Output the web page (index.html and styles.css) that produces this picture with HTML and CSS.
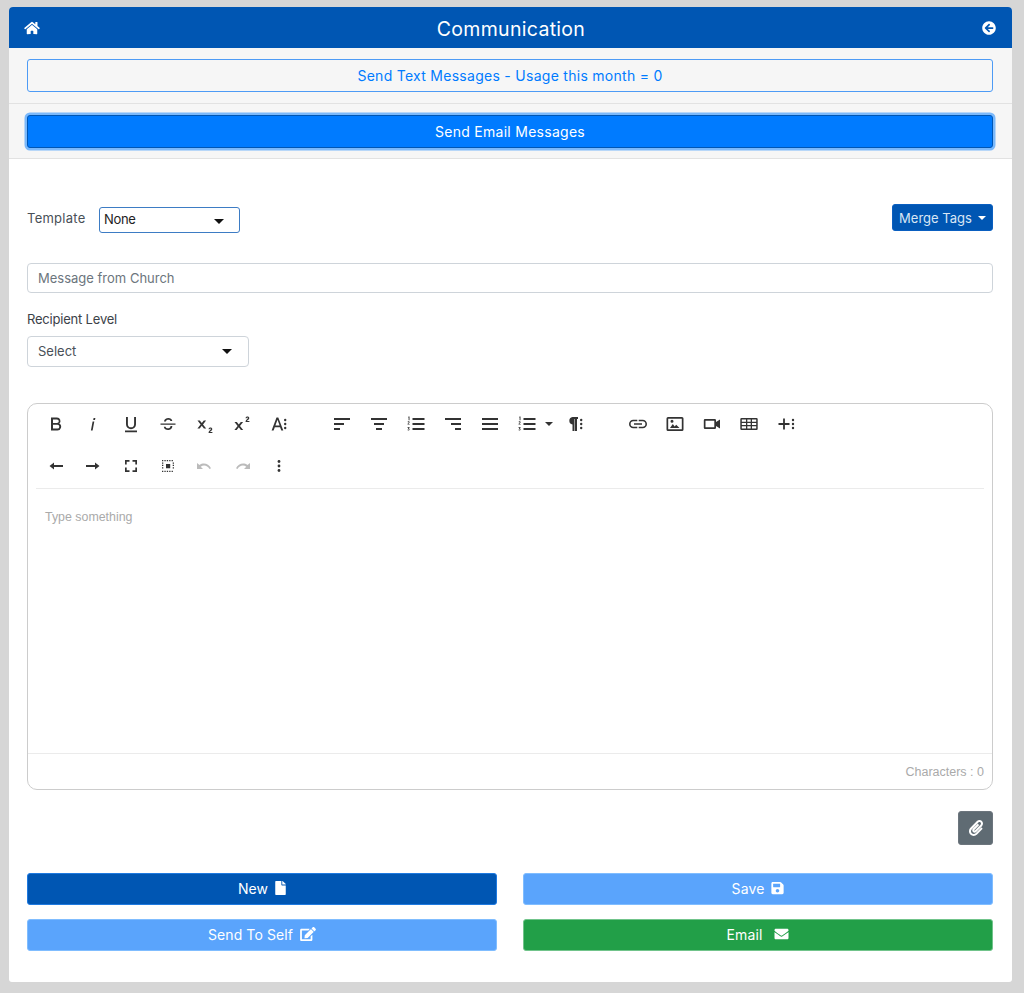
FILE: index.html
```html
<!DOCTYPE html>
<html lang="en">
<head>
<meta charset="utf-8">
<title>Communication</title>
<link rel="stylesheet" href="styles.css">
</head>
<body>
<main class="card">
  <header class="topbar">
    <svg class="top-icon home" viewBox="0 0 576 512"><path d="M280.37 148.26L96 300.11V464a16 16 0 0 0 16 16l112.06-.29a16 16 0 0 0 15.92-16V368a16 16 0 0 1 16-16h64a16 16 0 0 1 16 16v95.64a16 16 0 0 0 16 16.05L464 480a16 16 0 0 0 16-16V300L295.67 148.26a12.19 12.19 0 0 0-15.3 0zM571.6 251.47L488 182.56V44.05a12 12 0 0 0-12-12h-56a12 12 0 0 0-12 12v72.61L318.47 43a48 48 0 0 0-61 0L4.34 251.47a12 12 0 0 0-1.6 16.9l25.5 31A12 12 0 0 0 45.15 301l235.22-193.74a12.19 12.19 0 0 1 15.3 0L530.9 301a12 12 0 0 0 16.9-1.6l25.5-31a12 12 0 0 0-1.7-16.93z"/></svg>
    <h1 class="title">Communication</h1>
    <svg class="top-icon back" viewBox="0 0 512 512"><path d="M256 504C119 504 8 393 8 256S119 8 256 8s248 111 248 248-111 248-248 248zm28.9-143.6L209.4 288H392c13.3 0 24-10.7 24-24v-16c0-13.3-10.7-24-24-24H209.4l75.5-72.4c9.7-9.3 9.9-24.8.4-34.3l-11-10.9c-9.4-9.4-24.6-9.4-33.9 0L107.7 239c-9.4 9.4-9.4 24.6 0 33.9l132.7 132.7c9.4 9.4 24.6 9.4 33.9 0l11-10.9c9.5-9.5 9.3-25-.4-34.3z"/></svg>
  </header>

  <section class="band">
    <button class="band-btn outline">Send Text Messages - Usage this month = 0</button>
  </section>
  <section class="band">
    <button class="band-btn solid">Send Email Messages</button>
  </section>

  <div class="content">
    <div class="template-row">
      <label class="tpl-label">Template</label>
      <div class="tpl-select"><span>None</span><i class="caret dark"></i></div>
      <button class="merge">Merge Tags<i class="caret light"></i></button>
    </div>

    <div class="subject">Message from Church</div>

    <div class="recipient-label">Recipient Level</div>
    <div class="recipient"><span>Select</span><i class="caret dark"></i></div>

    <div class="editor">
      <div class="toolbar">
        <div class="tb-row">
          <div class="tb-group">
            <span class="tb"><svg viewBox="0 0 24 24"><path fill-rule="evenodd" d="M7 5.500h6a3.500 3.500 0 0 1 2.300 6.100A3.700 3.700 0 0 1 13.500 18.500H7zM9 7.400v3.600h4a1.800 1.800 0 0 0 0-3.600zM9 12.800v3.800h4.400a1.900 1.900 0 0 0 0-3.800z"/></svg></span>
            <span class="tb"><svg viewBox="0 0 24 24"><path d="M11.600 9.600h1.700l-1.700 9h-1.700zM12.600 6h1.800l-.4 1.900h-1.800z"/></svg></span>
            <span class="tb"><svg viewBox="0 0 24 24"><path d="M7 5h1.900v7.200a3.100 3.100 0 0 0 6.200 0V5H17v7.200a5 5 0 0 1-10 0zM6 18.600h12v1.700H6z"/></svg></span>
            <span class="tb"><svg viewBox="0 0 24 24"><path d="M4.500 11.400h15v1.400h-15zM8 9.600c0-4.600 8-5 8.300-.6h-1.800c-.4-2-4.600-1.800-4.600.6zM16.300 14c.3 5-8 5.400-8.500.8h1.800c.4 2.300 5 2.100 4.900-.8z"/></svg></span>
            <span class="tb"><svg viewBox="0 0 24 24"><path d="M4.500 8.500h2.300l2 2.600 2-2.600h2.300l-3.100 3.900 3.200 4.100h-2.300l-2.100-2.800-2.100 2.800H4.400l3.200-4.100zM15.500 17.200c.2-2.300 3.800-2.200 3.800-.1 0 1.500-1.700 2-2.300 3h2.400V21h-3.900c0-2.300 2.300-2.600 2.400-3.900 0-.8-1.200-.8-1.300.1z"/></svg></span>
            <span class="tb"><svg viewBox="0 0 24 24"><path d="M4.500 10h2.300l2 2.600 2-2.600h2.300l-3.100 3.900 3.200 4.100h-2.300l-2.100-2.800-2.100 2.800H4.400l3.200-4.100zM15.500 6.200c.2-2.300 3.800-2.200 3.800-.1 0 1.500-1.700 2-2.300 3h2.400V10h-3.900c0-2.300 2.300-2.600 2.400-3.900 0-.8-1.200-.8-1.300.1z"/></svg></span>
            <span class="tb"><svg viewBox="0 0 24 24"><path fill-rule="evenodd" d="M9.500 5.500h1.800l5 13h-2l-1.200-3.300H7.800l-1.200 3.300h-2zM8.400 13.500h4.200l-2.100-5.800z"/><circle cx="18.200" cy="8" r="1.200"/><circle cx="18.200" cy="12" r="1.200"/><circle cx="18.200" cy="16" r="1.200"/></svg></span>
          </div>
          <div class="tb-group">
            <span class="tb"><svg viewBox="0 0 24 24"><path d="M4 6h16v2H4zM4 11h10v2H4zM4 16h6v2H4z"/></svg></span>
            <span class="tb"><svg viewBox="0 0 24 24"><path d="M4 6h16v2H4zM7 11h10v2H7zM9 16h6v2H9z"/></svg></span>
            <span class="tb"><svg viewBox="0 0 24 24"><path d="M8.500 6h12v2h-12zM8.500 11h12v2h-12zM8.500 16h12v2h-12zM4.500 4.500h1v3.800h-.9V5.400h-.5zM3.500 10c.2-1 2.100-1 2.100.2 0 .8-1 1-1.200 1.700h1.300v.6h-2.200c0-1.200 1.200-1.400 1.200-2.200 0-.4-.5-.4-.6 0zM3.500 15h2.100v.5l-.8.800c1.200.2 1 2.200-.4 2.200-.5 0-.8-.2-1-.5l.4-.4c.3.400 1 .300 1-.2 0-.4-.4-.5-.8-.4v-.5l.7-.8H3.500z"/></svg></span>
            <span class="tb"><svg viewBox="0 0 24 24"><path d="M4 6h16v2H4zM10 11h10v2H10zM14 16h6v2h-6z"/></svg></span>
            <span class="tb"><svg viewBox="0 0 24 24"><path d="M4 6h16v2H4zM4 11h16v2H4zM4 16h16v2H4z"/></svg></span>
            <span class="tb tb-drop"><svg viewBox="0 0 24 24"><path d="M8.500 6h12v2h-12zM8.500 11h12v2h-12zM8.500 16h12v2h-12zM4.500 4.500h1v3.800h-.9V5.400h-.5zM3.500 10c.2-1 2.100-1 2.100.2 0 .8-1 1-1.200 1.700h1.300v.6h-2.200c0-1.200 1.200-1.400 1.200-2.200 0-.4-.5-.4-.6 0zM3.500 15h2.100v.5l-.8.800c1.200.2 1 2.200-.4 2.200-.5 0-.8-.2-1-.5l.4-.4c.3.400 1 .300 1-.2 0-.4-.4-.5-.8-.4v-.5l.7-.8H3.500z"/></svg><i class="caret tb-caret"></i></span>
            <span class="tb"><svg viewBox="0 0 24 24"><path d="M9.500 5H15v2h-1v12h-2V7h-.5v12h-2v-6.500a3.800 3.800 0 0 1 0-7.500z"/><circle cx="18.200" cy="8" r="1.200"/><circle cx="18.200" cy="12" r="1.200"/><circle cx="18.200" cy="16" r="1.200"/></svg></span>
          </div>
          <div class="tb-group">
            <span class="tb"><svg viewBox="0 0 24 24"><path d="M3 12a4.300 4.300 0 0 1 4.300-4.300h4v1.600h-4a2.700 2.700 0 0 0 0 5.400h4v1.600h-4A4.300 4.300 0 0 1 3 12zM8 11.200h8v1.600H8zM12.700 7.700h4a4.300 4.300 0 0 1 0 8.600h-4v-1.600h4a2.700 2.700 0 0 0 0-5.400h-4z"/></svg></span>
            <span class="tb"><svg viewBox="0 0 24 24"><path fill-rule="evenodd" d="M5 5h14a1.500 1.500 0 0 1 1.500 1.500v11A1.500 1.500 0 0 1 19 19H5a1.500 1.500 0 0 1-1.500-1.500v-11A1.500 1.500 0 0 1 5 5zM5.200 6.700v10.600h13.600V6.700zM7 16l2.800-4 1.900 2.600 1.500-1.800 3.300 3.200zM9 10.800a1.500 1.500 0 1 0 0-3 1.500 1.500 0 0 0 0 3z"/></svg></span>
            <span class="tb"><svg viewBox="0 0 24 24"><path fill-rule="evenodd" d="M5 7h9.800a1.200 1.200 0 0 1 1.200 1.200v1.800L20 7.500v9L16 14v1.800a1.200 1.200 0 0 1-1.200 1.200H5a1.200 1.200 0 0 1-1.200-1.200V8.200A1.200 1.200 0 0 1 5 7zM5.500 8.700v6.600h8.800V8.700z"/></svg></span>
            <span class="tb"><svg viewBox="0 0 24 24"><path fill-rule="evenodd" d="M4.500 6h15A1.200 1.200 0 0 1 20.700 7.200v9.600a1.200 1.200 0 0 1-1.200 1.200h-15a1.200 1.200 0 0 1-1.200-1.200V7.200A1.200 1.200 0 0 1 4.500 6zM4.800 7.400v2.300h4.200V7.400zM10.300 7.400v2.300h3.400V7.400zM15 7.400v2.300h4.200V7.400zM4.800 10.900v2.200h4.200v-2.200zM10.300 10.900v2.200h3.400v-2.200zM15 10.900v2.200h4.200v-2.200zM4.800 14.300v2.300h4.200v-2.300zM10.300 14.300v2.300h3.400v-2.300zM15 14.300v2.300h4.200v-2.300z"/></svg></span>
            <span class="tb"><svg viewBox="0 0 24 24"><path d="M9.100 6.500h1.800v4.600h4.600v1.800h-4.600v4.600H9.100v-4.600H4.500v-1.800h4.600z"/><circle cx="19" cy="8" r="1.200"/><circle cx="19" cy="12" r="1.200"/><circle cx="19" cy="16" r="1.200"/></svg></span>
          </div>
        </div>
        <div class="tb-row">
          <div class="tb-group">
            <span class="tb"><svg viewBox="0 0 24 24"><path d="M10 8.500v2.500h9v2h-9v2.500L5.500 12z"/></svg></span>
            <span class="tb"><svg viewBox="0 0 24 24"><path d="M14 8.500v2.500H5v2h9v2.500l4.500-3.500z"/></svg></span>
            <span class="tb"><svg viewBox="0 0 24 24"><path d="M6 6h4.500v1.700H7.700v2.800H6zM13.500 6H18v4.500h-1.700V7.700h-2.800zM6 13.500h1.700v2.800h2.800V18H6zM16.300 13.500H18V18h-4.500v-1.700h2.800z"/></svg></span>
            <span class="tb"><svg viewBox="0 0 24 24"><path d="M10 10h4.200v4.200H10zM6 6h1.300v1.300H6zM8.400 6h1.300v1.300H8.400zM10.800 6h1.300v1.300h-1.300zM13.200 6h1.300v1.300h-1.300zM15.600 6h1.300v1.300h-1.300zM6 16.700h1.300V18H6zM8.400 16.700h1.300V18H8.400zM10.800 16.700h1.300V18h-1.300zM13.200 16.700h1.300V18h-1.300zM15.600 16.700h1.300V18h-1.300zM6 8.400h1.300v1.300H6zM6 10.800h1.300v1.300H6zM6 13.200h1.300v1.300H6zM16.700 8.400H18v1.300h-1.300zM16.700 10.800H18v1.300h-1.300zM16.700 13.200H18v1.300h-1.300z"/></svg></span>
            <span class="tb off"><svg viewBox="0 0 24 24"><path d="M4 9v6h6l-2.300-2.300c2.800-2.200 7-1.300 8.800 2.300l1.500-.7c-2.200-4.700-7.600-6.100-11.500-3.300z"/></svg></span>
            <span class="tb off"><svg viewBox="0 0 24 24"><path d="M20 9v6h-6l2.300-2.300c-2.800-2.200-7-1.300-8.800 2.300L6 14.300c2.200-4.700 7.600-6.100 11.500-3.300z"/></svg></span>
            <span class="tb"><svg viewBox="0 0 24 24"><circle cx="12" cy="7.500" r="1.400"/><circle cx="12" cy="12" r="1.400"/><circle cx="12" cy="16.500" r="1.400"/></svg></span>
          </div>
        </div>
      </div>
      <div class="edit-area">Type something</div>
      <div class="edit-foot">Characters : 0</div>
    </div>

    <div class="attach-row">
      <button class="attach"><svg viewBox="0 0 448 512"><path d="M43.246 466.142c-58.43-60.289-57.341-157.511 1.386-217.581L254.392 34c44.316-45.332 116.351-45.336 160.671 0 43.89 44.894 43.943 117.329 0 162.276L232.214 383.128c-29.855 30.537-78.633 30.111-107.982-.998-28.275-29.97-27.368-77.473 1.452-106.953l143.743-146.835c6.182-6.314 16.312-6.422 22.626-.241l22.861 22.379c6.315 6.182 6.422 16.312.241 22.626L171.427 319.927c-4.932 5.045-5.236 13.428-.648 18.292 4.372 4.634 11.245 4.711 15.688.165l182.849-186.851c19.613-20.062 19.613-52.725-.011-72.798-19.189-19.627-49.957-19.637-69.154 0L90.39 293.295c-34.763 35.56-35.299 93.12-1.191 128.313 34.01 35.093 88.985 35.137 123.058.286l172.06-175.999c6.177-6.319 16.307-6.433 22.626-.256l22.877 22.364c6.319 6.177 6.434 16.307.256 22.626l-172.06 175.998c-59.576 60.938-155.943 60.216-214.77-.485z"/></svg></button>
    </div>

    <div class="actions">
      <button class="act navy">New<svg class="ico-file" viewBox="0 0 384 512"><path d="M224 136V0H24C10.700 0 0 10.700 0 24v464c0 13.300 10.700 24 24 24h336c13.300 0 24-10.700 24-24V160H248c-13.200 0-24-10.800-24-24zm160-14.100v6.100H256V0h6.100c6.400 0 12.500 2.500 17 7l97.900 98c4.500 4.500 7 10.600 7 16.900z"/></svg></button>
      <button class="act sky">Save<svg class="ico-save" viewBox="0 0 448 512"><path d="M433.941 129.941l-83.882-83.882A48 48 0 0 0 316.118 32H48C21.490 32 0 53.490 0 80v352c0 26.510 21.490 48 48 48h352c26.510 0 48-21.490 48-48V163.882a48 48 0 0 0-14.059-33.941zM224 416c-35.346 0-64-28.654-64-64 0-35.346 28.654-64 64-64s64 28.654 64 64c0 35.346-28.654 64-64 64zm96-304.520V212c0 6.627-5.373 12-12 12H76c-6.627 0-12-5.373-12-12V108c0-6.627 5.373-12 12-12h228.520c3.183 0 6.235 1.264 8.485 3.515l3.480 3.480A11.996 11.996 0 0 1 320 111.480z"/></svg></button>
      <button class="act sky">Send To Self<svg class="ico-edit" viewBox="0 0 576 512"><path d="M402.600 83.200l90.200 90.200c3.800 3.800 3.800 10 0 13.800L274.400 405.600l-92.800 10.300c-12.400 1.400-22.900-9.100-21.500-21.500l10.300-92.800L388.800 83.200c3.800-3.800 10-3.800 13.800 0zm162-22.900l-48.800-48.800c-15.200-15.200-39.900-15.200-55.200 0l-35.400 35.400c-3.800 3.800-3.800 10 0 13.800l90.200 90.200c3.800 3.800 10 3.800 13.800 0l35.400-35.400c15.200-15.300 15.200-40 0-55.200zM384 346.200V448H64V128h229.800c3.200 0 6.200-1.300 8.500-3.500l40-40c7.600-7.600 2.200-20.500-8.500-20.500H48C21.500 64 0 85.500 0 112v352c0 26.500 21.500 48 48 48h352c26.500 0 48-21.500 48-48V306.200c0-10.700-12.900-16-20.500-8.500l-40 40c-2.200 2.300-3.500 5.300-3.500 8.500z"/></svg></button>
      <button class="act green">Email<svg class="ico-mail" viewBox="0 0 512 512"><path d="M502.300 190.800c3.900-3.100 9.700-.2 9.700 4.700V400c0 26.500-21.500 48-48 48H48c-26.500 0-48-21.500-48-48V195.600c0-5 5.700-7.800 9.700-4.700 22.400 17.400 52.100 39.500 154.100 113.600 21.100 15.400 56.700 47.800 92.200 47.600 35.700.3 72-32.800 92.300-47.600 102-74.100 131.600-96.300 154-113.700zM256 320c23.200.4 56.600-29.200 73.400-41.400 132.700-96.300 142.800-104.700 173.400-128.700 5.800-4.500 9.200-11.500 9.200-18.900v-19c0-26.500-21.500-48-48-48H48C21.500 64 0 85.500 0 112v19c0 7.400 3.400 14.300 9.200 18.900 30.600 23.900 40.700 32.400 173.400 128.700 16.800 12.200 50.200 41.800 73.400 41.400z"/></svg></button>
    </div>
  </div>
</main>
</body>
</html>
```

FILE: styles.css
```css
* { box-sizing: border-box; }
html, body { height: 100%; }
body {
  margin: 0;
  padding: 7px 12px 11px 9px;
  background: #d6d6d6;
  font-family: "Inter", "Liberation Sans", sans-serif;
  font-size: 13px;
  color: #495057;
}
button { font-family: inherit; cursor: pointer; }
.card {
  height: 975px;
  background: #fff;
  border-radius: 4px 4px 3px 3px;
  overflow: hidden;
  display: flex;
  flex-direction: column;
}
.topbar {
  height: 41px;
  flex: none;
  background: #0056b3;
  color: #fff;
  display: flex;
  align-items: center;
  justify-content: space-between;
  padding: 0 16px 0 15px;
}
.top-icon { fill: #fff; display: block; }
.home { width: 16px; height: 14px; }
.back { width: 14px; height: 14px; }
.title {
  margin: 5px 0 0;
  font-size: 19.500px;
  font-weight: 400;
  letter-spacing: .3px;
  line-height: 1;
}
.band {
  height: 56px;
  flex: none;
  background: #f6f6f6;
  border-bottom: 1px solid #e2e2e2;
  padding: 11px 19px 0 18px;
}
.band + .band { height: 55px; }
.band-btn {
  display: block;
  width: 100%;
  height: 33px;
  border-radius: 3px;
  font-size: 14px;
  letter-spacing: .28px;
}
.outline { background: transparent; border: 1px solid #4d9bf5; color: #007bff; }
.solid {
  background: #007bff;
  border: 1px solid #0056b3;
  color: #fff;
  padding-bottom: 2px;
  box-shadow: 0 0 0 2.500px rgba(0, 123, 255, .5);
}
.content {
  flex: 1;
  padding: 0 19px 0 18px;
  display: flex;
  flex-direction: column;
}
.template-row {
  margin-top: 45px;
  height: 27px;
  display: flex;
  align-items: center;
}
.tpl-label { width: 72px; letter-spacing: .25px; }
.tpl-select {
  width: 141px;
  height: 26px;
  margin-top: 4px;
  border: 1px solid #3d7cc4;
  border-radius: 3px;
  padding: 0 15px 0 4px;
  display: flex;
  align-items: center;
  justify-content: space-between;
  color: #222;
  background: #fff;
  letter-spacing: -.3px;
}
.tpl-select .caret { margin-top: 4px; }
.tpl-select span { margin-top: -1px; }
.merge {
  margin-left: auto;
  width: 101px;
  height: 27px;
  border: 1px solid #0a5fc0;
  background: #0056b3;
  color: #d9e6f5;
  border-radius: 3px;
  font-size: 13px;
  padding: 0;
  display: flex;
  align-items: center;
  justify-content: center;
}
.caret { display: block; width: 0; height: 0; border-style: solid; border-color: transparent; border-width: 5px 5px 0; }
.caret.dark { border-top-color: #111; }
.caret.light { border-width: 4px 4px 0; border-top-color: #fff; margin-left: 6px; }
.subject {
  margin-top: 32px;
  height: 30px;
  flex: none;
  border: 1px solid #ced4da;
  border-radius: 4px;
  padding: 0 10px;
  display: flex;
  align-items: center;
  color: #6c757d;
}
.recipient-label { margin-top: 18px; height: 17px; line-height: 17px; color: #3c4248; letter-spacing: -.2px; }
.recipient {
  margin-top: 8px;
  width: 222px;
  height: 31px;
  flex: none;
  border: 1px solid #ced4da;
  border-radius: 4px;
  padding: 0 16px 1px 10px;
  display: flex;
  align-items: center;
  justify-content: space-between;
  color: #495057;
}
.editor {
  margin-top: 36px;
  height: 387px;
  flex: none;
  border: 1px solid #cccccc;
  border-radius: 10px;
  display: flex;
  flex-direction: column;
}
.toolbar {
  margin: 0 8px;
  border-bottom: 1px solid #ebebeb;
  padding-left: 1.800px;
  height: 85px;
  flex: none;
}
.tb-row { height: 40px; display: flex; gap: 26px; }
.tb-row + .tb-row { height: 44px; }
.tb-group { display: flex; }
.tb {
  width: 37.100px;
  height: 100%;
  display: flex;
  align-items: center;
  justify-content: center;
}
.tb svg { width: 24px; height: 24px; fill: #333; display: block; flex: none; }
.tb.off svg { fill: #bbb; }
.tb-drop { width: 47.500px; justify-content: flex-start; padding-left: 6px; }
.tb-caret { border-width: 4px 4px 0; border-top-color: #333; margin-left: 6px; }
.edit-area {
  flex: 1;
  padding: 21px 17px;
  font-family: "Liberation Sans", Arial, sans-serif;
  font-size: 12.400px;
  line-height: 15px;
  color: #aaa;
}
.edit-foot {
  height: 36px;
  flex: none;
  border-top: 1px solid #ebebeb;
  display: flex;
  align-items: center;
  justify-content: flex-end;
  padding-right: 8px;
  font-family: "Liberation Sans", Arial, sans-serif;
  font-size: 12.500px;
  color: #aaa;
}
.attach-row { display: flex; justify-content: flex-end; margin-top: 21px; }
.attach {
  width: 35px;
  height: 34px;
  background: #5f6b73;
  border: 1px solid #6c757d;
  border-radius: 3px;
  padding: 0;
  display: flex;
  align-items: center;
  justify-content: center;
}
.attach svg { width: 14px; height: 16px; fill: #fff; display: block; }
.actions {
  margin-top: 28px;
  display: grid;
  grid-template-columns: 470px 470px;
  column-gap: 26px;
  row-gap: 14px;
}
.act {
  height: 32px;
  border-radius: 3px;
  border: 1px solid transparent;
  color: #fff;
  font-size: 14px;
  letter-spacing: .1px;
  padding: 0 0 2px;
  display: flex;
  align-items: center;
  justify-content: center;
}
.act svg { fill: #fff; display: block; height: 14px; margin-left: 7px; }
.ico-file { width: 11px; }
.ico-save { width: 13px; }
.ico-edit { width: 16px; }
.ico-mail { width: 15px; margin-left: 12px !important; }
.navy { background: #0056b3; border-color: #1f7ae0; }
.sky { background: #5aa4fc; border-color: #80bdff; }
.green { background: #229f48; border-color: #71c48b; }
```
